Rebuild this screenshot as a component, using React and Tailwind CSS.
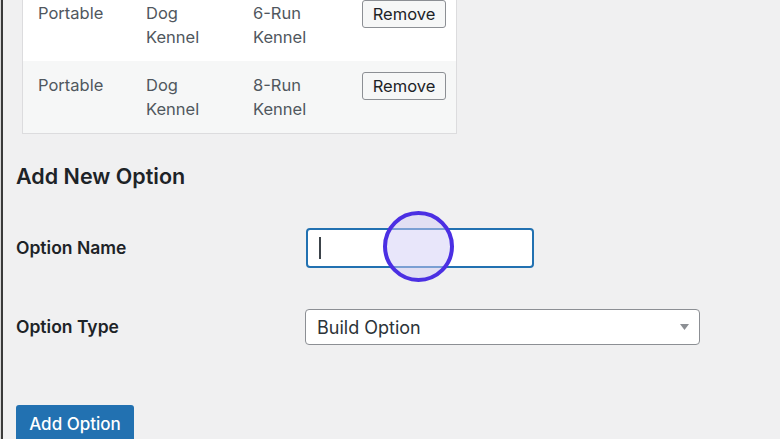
import React from "react";

const font = { fontFamily: "Inter, 'Noto Sans', 'Liberation Sans', sans-serif" };

function Row({ a, b1, b2, c1, c2, bg }) {
  return (
    <div className={`flex h-[72px] ${bg} pt-[12px]`}>
      <div className="w-[123px] pl-[15px] text-[16.5px] leading-[24px] text-[#50575e]">{a}</div>
      <div className="w-[107px] text-[16.5px] leading-[24px] text-[#50575e]">
        <div>{b1}</div>
        <div>{b2}</div>
      </div>
      <div className="w-[109px] text-[16.5px] leading-[24px] text-[#50575e]">
        <div>{c1}</div>
        <div>{c2}</div>
      </div>
      <div>
        <button className="-mt-[1px] h-[28px] w-[84px] rounded-[3px] border border-[#8c8f94] bg-[#f6f7f7] text-[16.5px] text-[#1d2327]">
          Remove
        </button>
      </div>
    </div>
  );
}

export default function App() {
  return (
    <div className="h-[439px] w-[780px] overflow-hidden bg-[#f0f0f1]" style={font}>
      <div className="flex h-full">
        <div className="w-[1px] bg-[#d8d8d8]" />
        <div className="w-[2px] bg-[#3a3a3a]" />
        <div className="flex-1 pl-[13px]">
          <div className="-mt-[12px] ml-[6px] w-[435px] border border-[#dcdcde] bg-white">
            <Row a="Portable" b1="Dog" b2="Kennel" c1="6-Run" c2="Kennel" bg="bg-white" />
            <Row a="Portable" b1="Dog" b2="Kennel" c1="8-Run" c2="Kennel" bg="bg-[#f6f7f7]" />
          </div>

          <h2 className="mt-[28px] text-[21.5px] font-semibold leading-[28px] text-[#1d2327]">Add New Option</h2>

          <div className="mt-[38px] flex items-center">
            <div className="w-[290px] text-[17.5px] font-semibold text-[#1d2327]">Option Name</div>
            <div className="relative flex h-[40px] w-[228px] items-center rounded-[4px] border-2 border-[#2271b1] bg-white pl-[11px]">
              <div className="h-[22px] w-[1.5px] bg-[#3c434a]" />
              <div className="absolute left-[75px] top-[-19px] h-[71px] w-[71px] rounded-full border-[4.5px] border-[#4b2fe3] bg-[rgba(210,205,245,0.5)]" />
            </div>
          </div>

          <div className="mt-[41px] flex items-center">
            <div className="w-[289px] text-[17.5px] font-semibold text-[#1d2327]">Option Type</div>
            <div className="flex h-[36px] w-[395px] items-center justify-between rounded-[4px] border border-[#8c8f94] bg-white pl-[11px] pr-[10px] text-[18px] text-[#2c3338]">
              <span>Build Option</span>
              <svg width="9" height="6" viewBox="0 0 9 6">
                <path d="M0 0 L9 0 L4.5 6 Z" fill="#8c8f94" />
              </svg>
            </div>
          </div>

          <button className="mt-[60px] h-[40px] w-[118px] rounded-[3px] bg-[#2271b1] text-[17px] font-medium text-white">
            Add Option
          </button>
        </div>
      </div>
    </div>
  );
}
